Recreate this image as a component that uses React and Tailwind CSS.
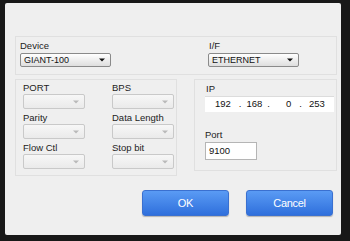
import React from 'react';

const font = { fontFamily: '"Liberation Sans", Arial, sans-serif' };

function Arrow({ dark }) {
  return (
    <svg width="6" height="4" viewBox="0 0 6 4" className="shrink-0">
      <path d="M0 0.5 L6 0.5 L3 3.5 Z" fill={dark ? '#111' : '#b9b9b9'} />
    </svg>
  );
}

function Select({ value, width, height, dark }) {
  return (
    <div
      className={`flex items-center justify-between rounded-[2px] border pl-[3px] pr-[5px] ${
        dark
          ? 'border-[#8a8a8a] bg-gradient-to-b from-[#ffffff] to-[#dedede]'
          : 'border-[#c9c9c9] bg-gradient-to-b from-[#f7f7f7] to-[#eaeaea]'
      }`}
      style={{ width, height }}
    >
      <span className="text-[9px] leading-none text-[#111]">{value}</span>
      <Arrow dark={dark} />
    </div>
  );
}

function Field({ label, children }) {
  return (
    <div className="flex flex-col">
      <span className="text-[9.5px] leading-[11px] text-[#222]">{label}</span>
      <div className="mt-[1px]">{children}</div>
    </div>
  );
}

export default function App() {
  return (
    <div style={font} className="w-[350px] h-[241px] bg-[#181818] pt-[3px] pl-[5px] pr-[9px] pb-[6px]">
      <div className="h-full bg-[#efefef] rounded-[2px] pt-[33px] pl-[10px] pr-[4px] flex flex-col">
        {/* Device / interface */}
        <div className="h-[39px] border border-[#e0e0e0] flex pl-[4px] pt-[3px]">
          <div className="flex flex-col">
            <span className="text-[9.5px] leading-[11px] text-[#222]">Device</span>
            <div className="mt-[2px]">
              <Select value="GIANT-100" width={91} height={14} dark />
            </div>
          </div>
          <div className="flex flex-col ml-[97px]">
            <span className="text-[9.5px] leading-[11px] text-[#222] pl-[1px]">I/F</span>
            <div className="mt-[2px]">
              <Select value="ETHERNET" width={91} height={14} dark />
            </div>
          </div>
        </div>

        <div className="flex mt-[4px] gap-[17px]">
          {/* Serial settings */}
          <div className="w-[162px] h-[97px] border border-[#e0e0e0] pl-[7px] pt-[2px] grid grid-cols-[62px_62px] gap-x-[27px] gap-y-[3px] content-start">
            <Field label="PORT"><Select value="" width={62} height={15} /></Field>
            <Field label="BPS"><Select value="" width={62} height={15} /></Field>
            <Field label="Parity"><Select value="" width={62} height={15} /></Field>
            <Field label="Data Length"><Select value="" width={62} height={15} /></Field>
            <Field label="Flow Ctl"><Select value="" width={62} height={15} /></Field>
            <Field label="Stop bit"><Select value="" width={62} height={15} /></Field>
          </div>

          {/* Network settings */}
          <div className="w-[143px] h-[92px] border border-[#e0e0e0] pl-[10px] pt-[3px] flex flex-col">
            <span className="text-[9.5px] leading-[11px] text-[#222] pl-[1px]">IP</span>
            <div className="mt-[2px] w-[129px] h-[16px] bg-white border-t border-[#dcdcdc] flex items-center text-[9.5px] text-[#111]">
              <span className="ml-[10px]">192</span>
              <span className="ml-[8px]">.</span>
              <span className="ml-[5px]">168</span>
              <span className="ml-[5px]">.</span>
              <span className="ml-[16px]">0</span>
              <span className="ml-[8px]">.</span>
              <span className="ml-[7px]">253</span>
            </div>
            <span className="mt-[17px] text-[9.5px] leading-[11px] text-[#222]">Port</span>
            <div className="mt-[2px] w-[52px] h-[18px] bg-white border border-[#b5b5b5] flex items-center pl-[3px] text-[9.5px] text-[#111]">
              9100
            </div>
          </div>
        </div>

        {/* Buttons */}
        <div className="flex justify-end gap-[17px] mt-[14px] pr-[4px]">
          <button className="w-[87px] h-[26px] rounded-[3px] border border-[#3a70d0] bg-gradient-to-b from-[#5a9bf4] to-[#2f6fdc] text-white text-[11px] tracking-[-0.3px] shadow-[0_1px_1px_rgba(0,0,0,0.25)]">
            OK
          </button>
          <button className="w-[87px] h-[26px] rounded-[3px] border border-[#3a70d0] bg-gradient-to-b from-[#5a9bf4] to-[#2f6fdc] text-white text-[11px] tracking-[-0.3px] shadow-[0_1px_1px_rgba(0,0,0,0.25)]">
            Cancel
          </button>
        </div>
      </div>
    </div>
  );
}
